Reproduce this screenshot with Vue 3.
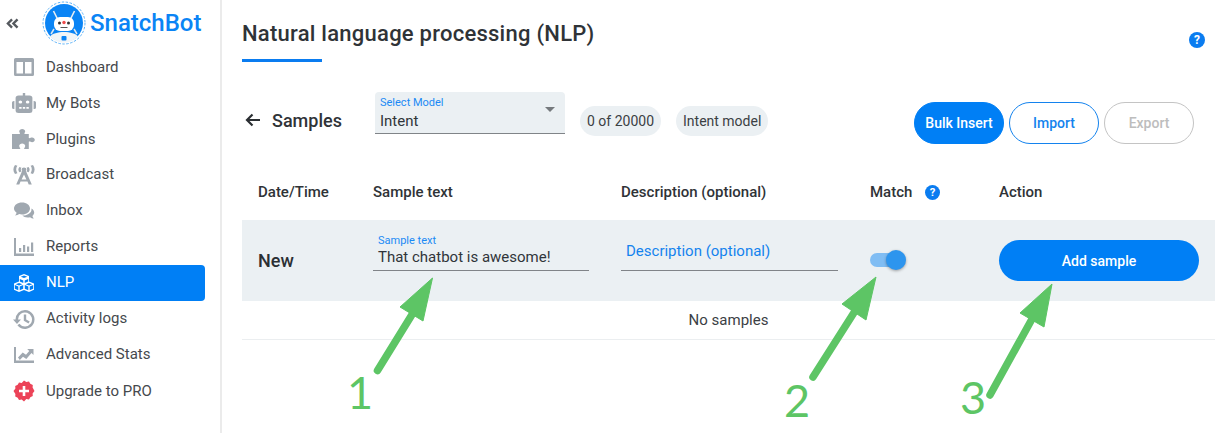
<script setup>
const icons = {
  dash: { vb: '-2 0 24 20', d: 'M0 2.500A1.500 1.500 0 0 1 1.500 1h17A1.500 1.500 0 0 1 20 2.500v15a1.500 1.500 0 0 1-1.500 1.500h-17A1.500 1.500 0 0 1 0 17.500zM2.500 5v11.500H9V5zM11 5v11.500h6.500V5z' },
  bot: { vb: '0 0 20 20', d: 'M9 0h2v2.500h3.500A2.500 2.500 0 0 1 17 5v12.500a2.500 2.500 0 0 1-2.500 2.500h-9A2.500 2.500 0 0 1 3 17.500V5a2.500 2.500 0 0 1 2.500-2.500H9zM7 7.500a1.500 1.500 0 1 0 0 3 1.500 1.500 0 0 0 0-3zm6 0a1.500 1.500 0 1 0 0 3 1.500 1.500 0 0 0 0-3zM6 14v1.800h2V14zm3 0v1.800h2V14zm3 0v1.800h2V14zM1.500 8H2v8h-.5A1.500 1.500 0 0 1 0 14.500v-5A1.500 1.500 0 0 1 1.500 8zM18 8h.5A1.500 1.500 0 0 1 20 9.500v5a1.500 1.500 0 0 1-1.500 1.500H18z' },
  plug: { vb: '0 0 20 20', d: 'M0 5h6.500C7 4 6 3.500 6 2.300 6 1 7.200 0 8.500 0S11 1 11 2.300C11 3.500 10 4 10.500 5H14v4c1 .5 1.500-.5 2.700-.5 1.300 0 2.300 1 2.300 2.300s-1 2.400-2.300 2.400c-1.200 0-1.700-1-2.700-.5V20H10c.5-1.200 1-2 1-3.200 0-1.300-1.200-2.300-2.500-2.300S6 15.500 6 16.800c0 1.200.6 2 1 3.200H0z' },
  cast: { vb: '0 0 20 20', d: 'M2.500 0l2 .8C3.300 2.700 3 5.500 4.500 8.200l-2 .8C.7 6 .7 2.800 2.500 0zM17.500 0c1.800 2.800 1.800 6 0 9l-2-.8c1.500-2.700 1.200-5.500 0-7.400zM6.200 2l1.700.8c-.7 1.100-.7 2.500 0 3.600L6.200 7.200C5 5.500 5 3.700 6.200 2zM13.800 2c1.200 1.700 1.200 3.500 0 5.200l-1.700-.8c.7-1.100.7-2.500 0-3.600zM10 2.500a2 2 0 0 1 2 2c0 .5-.2 1-.5 1.300L16.500 19.500h-2.600l-1-3H7.100l-1 3H3.500L8.500 5.800C8.200 5.500 8 5 8 4.500a2 2 0 0 1 2-2zM10 9.500L8 14.400h4z' },
  inbox: { vb: '-2 -0.500 24 20', d: 'M8 1c4.500 0 8 2.600 8 6s-3.500 6-8 6c-1 0-2-.1-2.800-.4C4.200 13.400 2.700 14 1 14c.8-.8 1.400-1.800 1.600-2.800C1 10.100 0 8.700 0 7c0-3.400 3.500-6 8-6zM17.500 7c1.600 1 2.700 2.500 2.700 4.100 0 1.300-.7 2.500-1.800 3.400.2.900.7 1.700 1.400 2.500-1.500 0-2.800-.6-3.700-1.300-.8.300-1.700.4-2.600.4-2.100 0-4-.7-5.200-2 4.500.1 9.800-2.200 9.200-7.100z' },
  rep: { vb: '-2 -1 24 20', d: 'M0 0h2v15.500h18V18H0zM5 10h2.200v4H5zM9 7h2.200v7H9zM13 8.500h2.200V14H13zM17 4.500h2.200V14H17z' },
  cube: { vb: '-2 -1 24 20', d: 'M10 0l5 2v5.500l5 2v6.300L15 18l-5-2-5 2-5-2.200V9.500l5-2V2zM6.700 2.700L10 4l3.300-1.300L10 1.400zM5.800 5v2.500l3.500 1.400V6.400zM10.700 6.400v2.500l3.500-1.400V5zM1.700 10.200L5 11.500l3.300-1.300L5 8.900zM11.700 10.200L15 11.500l3.300-1.300L15 8.900zM.8 11v3.800l3.500 1.500v-3.900zM5.700 12.400v3.900l3.500-1.500V11zM10.800 11v3.800l3.500 1.500v-3.900zM15.700 12.400v3.900l3.500-1.500V11z' },
  hist: { vb: '-2 -0.500 24 20', d: 'M11 .5a9.500 9.500 0 1 1-7.600 15.200l2-1.500A7 7 0 1 0 4 10h3l-4 4.500L-1 10h2.500A9.500 9.500 0 0 1 11 .5zM9.800 5h2.400v5l3.500 2-1.200 2-4.700-2.800z' },
  adv: { vb: '-2 1 24 20', d: 'M0 3h2v13.500h18V19H0zM4 13.500l4.700-5 3.300 2.200 3.200-3.600-2-2h6.300v6l-2-2-5.200 5.800-3.300-2.200-3.200 3.400z' }
}
const menu = [
  { label: 'Dashboard', icon: 'dash' },
  { label: 'My Bots', icon: 'bot' },
  { label: 'Plugins', icon: 'plug' },
  { label: 'Broadcast', icon: 'cast' },
  { label: 'Inbox', icon: 'inbox' },
  { label: 'Reports', icon: 'rep' },
  { label: 'NLP', icon: 'cube', active: true },
  { label: 'Activity logs', icon: 'hist' },
  { label: 'Advanced Stats', icon: 'adv' }
]
</script>

<template>
  <div class="page">
    <aside class="side">
      <div class="brand">
        <svg class="collapse" width="13" height="11" viewBox="0 0 14 12" fill="none" stroke="#55595e" stroke-width="2.600">
          <path d="M6.500 1.500L2 6l4.500 4.500M12.500 1.500L8 6l4.500 4.500" />
        </svg>
        <svg class="logo" width="44" height="44" viewBox="0 0 44 44">
          <circle cx="22" cy="22" r="21" fill="#fff" stroke="#5cb2f8" stroke-width="1" stroke-dasharray="2.500 1.500" />
          <circle cx="22" cy="22" r="19" fill="#0a84f5" />
          <path d="M8 35.500c2-3 8-4.500 14-4.500s12 1.500 14 4.500a19 19 0 0 1-28 0z" fill="#f2f5f7" />
          <path d="M11.500 10l4 8M32.500 10l-4 8" stroke="#e9eef2" stroke-width="1.600" />
          <path d="M12 28l-3 5M32 28l3 5" stroke="#dfe7ee" stroke-width="1.500" />
          <rect x="12" y="16" width="20" height="14" rx="6" fill="#fff" />
          <circle cx="17.500" cy="22" r="1.500" fill="#333" />
          <circle cx="26.500" cy="22" r="1.500" fill="#333" />
          <circle cx="22" cy="21.500" r="1.700" fill="#ee4b4b" />
          <path d="M18.500 26.500h7" stroke="#555" stroke-width="1" />
          <rect x="19.500" y="35" width="5" height="4.500" rx="1" fill="#0a84f5" />
        </svg>
        <span class="brand-name">SnatchBot</span>
      </div>
      <nav class="nav">
        <a v-for="item in menu" :key="item.label" class="nav-item" :class="{ active: item.active }">
          <svg class="nav-icon" width="24" height="20" :viewBox="icons[item.icon].vb" preserveAspectRatio="none">
            <path :d="icons[item.icon].d" fill-rule="evenodd" />
          </svg>
          <span>{{ item.label }}</span>
        </a>
        <a class="nav-item">
          <svg class="nav-icon" width="24" height="22" viewBox="-1 0 24 22">
            <path d="M11 .5l2.300 1.400 2.700-.4 1.300 2.300 2.500 1.100-.2 2.700L21.500 11l-1.900 2.400.2 2.700-2.500 1.100-1.300 2.300-2.700-.4L11 21.500l-2.300-1.900-2.700.4-1.300-2.300-2.500-1.100.2-2.700L.5 11l1.900-2.400-.2-2.700 2.500-1.100L6 2.500l2.700.4z" fill="#ec4358" />
            <path d="M9.700 6h2.600v3.700H16v2.600h-3.700V16H9.700v-3.700H6V9.700h3.700z" fill="#fff" />
          </svg>
          <span>Upgrade to PRO</span>
        </a>
      </nav>
    </aside>

    <main class="main">
      <header class="head">
        <h1>Natural language processing (NLP)</h1>
        <svg class="help-top" width="16" height="16" viewBox="0 0 16 16">
          <circle cx="8" cy="8" r="8" fill="#0a7cf0" />
          <text x="8" y="12.200" text-anchor="middle" class="q">?</text>
        </svg>
      </header>
      <div class="title-bar"></div>

      <section class="toolbar">
        <svg class="back" width="16" height="14" viewBox="0 0 16 14" fill="none" stroke="#2b2f33" stroke-width="2.200">
          <path d="M15 7H2M7.500 1.500L2 7l5.500 5.500" />
        </svg>
        <h2>Samples</h2>
        <div class="select">
          <label>Select Model</label>
          <div class="value">Intent</div>
          <i class="caret"></i>
        </div>
        <span class="chip first">0 of 20000</span>
        <span class="chip">Intent model</span>
        <div class="actions">
          <button class="btn solid">Bulk Insert</button>
          <button class="btn outline">Import</button>
          <button class="btn off">Export</button>
        </div>
      </section>

      <section class="table">
        <div class="grid thead">
          <div>Date/Time</div>
          <div>Sample text</div>
          <div>Description (optional)</div>
          <div class="match">Match
            <svg width="15" height="15" viewBox="0 0 16 16">
              <circle cx="8" cy="8" r="8" fill="#0a7cf0" />
              <text x="8" y="12.200" text-anchor="middle" class="q">?</text>
            </svg>
          </div>
          <div>Action</div>
        </div>
        <div class="grid trow">
          <div class="new">New</div>
          <div class="field">
            <label>Sample text</label>
            <div class="field-value">That chatbot is awesome!</div>
          </div>
          <div class="field desc">
            <div class="placeholder">Description (optional)</div>
          </div>
          <div><div class="switch"><i></i></div></div>
          <div><button class="add">Add sample</button></div>
        </div>
        <div class="empty">No samples</div>
      </section>
    </main>

    <svg class="arrows" width="1221" height="433" viewBox="0 0 1221 433">
      <g fill="#5dc565" stroke="#5dc565">
        <path d="M377.500 370.500L413 313" stroke-width="7.500" stroke-linecap="round" fill="none" />
        <path d="M432.500 278L400 307 423 321z" stroke-width="1" />
        <path d="M813 377L855 311" stroke-width="7.500" stroke-linecap="round" fill="none" />
        <path d="M876 277L842 304 866 320z" stroke-width="1" />
        <path d="M990 395L1032 319" stroke-width="7.500" stroke-linecap="round" fill="none" />
        <path d="M1052 284L1020 313 1044 327z" stroke-width="1" />
      </g>
    </svg>
    <span class="num n1">1</span>
    <span class="num n2">2</span>
    <span class="num n3">3</span>
  </div>
</template>

<style>
html, body { margin: 0; background: #fff; }
</style>

<style scoped>
.page {
  position: relative;
  display: flex;
  width: 1221px;
  height: 433px;
  overflow: hidden;
  font-family: Roboto, "Liberation Sans", sans-serif;
  color: #2f3337;
}
.side {
  flex: 0 0 220px;
  box-sizing: content-box;
  border-right: 2px solid #ebebeb;
}
.brand {
  display: flex;
  align-items: center;
  height: 49px;
  padding-left: 6px;
}
.collapse { margin-right: 23px; margin-top: -3px; }
.logo { margin-right: 4px; margin-top: -4px; }
.brand-name {
  font-size: 24px;
  font-weight: 500;
  color: #0a84f5;
  margin-top: -4px;
}
.nav { display: flex; flex-direction: column; width: 205px; }
.nav-item {
  display: flex;
  align-items: center;
  height: 36px;
  padding-left: 12px;
  font-size: 15px;
  color: #45494d;
  border-radius: 0 4px 4px 0;
}
.nav-item span { margin-left: 10px; }
.nav-item:nth-child(n+4):nth-child(-n+9) span { margin-top: -2px; }
.nav-icon { fill: #a0a8b0; flex: none; }
.nav-item.active { background: #007ff5; color: #fff; }
.nav-item.active .nav-icon { fill: #fff; }

.main { flex: 1; padding: 0 6px 0 20px; min-width: 0; }
.head {
  display: flex;
  justify-content: space-between;
  height: 59px;
}
h1 {
  margin: 21px 0 0;
  font-size: 22px;
  line-height: 26px;
  font-weight: 500;
  letter-spacing: .25px;
  color: #2f3337;
}
.help-top { margin: 32px 10px 0 0; }
.q { font: 700 12px Roboto, sans-serif; fill: #fff; }
.title-bar { width: 80px; height: 3px; background: #0a7cf0; }

.toolbar {
  display: flex;
  align-items: center;
  height: 56px;
  margin-top: 30px;
}
.back { margin-left: 3px; margin-right: 11px; }
h2 {
  width: 103px;
  margin: 0;
  font-size: 18px;
  font-weight: 500;
  color: #2f3337;
}
.select {
  position: relative;
  align-self: flex-start;
  box-sizing: border-box;
  width: 190px;
  height: 42px;
  padding: 4px 5px 0;
  background: #ebf0f3;
  border-bottom: 1px solid #808488;
  border-radius: 4px 4px 0 0;
}
.select label { display: block; font-size: 11px; line-height: 13px; color: #1b8af5; }
.value { font-size: 15px; line-height: 20px; margin-top: 2px; color: #30353a; }
.caret {
  position: absolute;
  right: 10px;
  top: 15px;
  border: 5px solid transparent;
  border-top-color: #75797d;
  border-bottom-width: 0;
}
.chip {
  display: inline-flex;
  align-items: center;
  height: 30px;
  margin-top: 2px;
  margin-left: 15px;
  padding: 0 7px;
  font-size: 14px;
  color: #3b4044;
  background: #ebf0f3;
  border-radius: 15px;
}
.actions {
  display: flex;
  align-self: flex-start;
  gap: 5px;
  margin-left: auto;
  margin-top: 10px;
  margin-right: 21px;
}
.btn {
  box-sizing: border-box;
  width: 90px;
  height: 42px;
  padding: 0;
  font: 500 14px Roboto, sans-serif;
  border-radius: 21px;
  border: 1px solid;
  background: #fff;
}
.solid { background: #007ff5; border-color: #007ff5; color: #fff; }
.outline { border-color: #1483ee; color: #1483ee; }
.off { border-color: #c4c4c4; color: #bdbdbd; }

.grid {
  display: grid;
  grid-template-columns: 115px 248px 249px 129px 1fr;
  padding-left: 16px;
}
.table { margin-top: 22px; }
.thead {
  box-sizing: border-box;
  align-items: center;
  height: 50px;
  padding-bottom: 6px;
  font-size: 15px;
  font-weight: 500;
  color: #2f3337;
}
.match { display: flex; align-items: center; gap: 13px; }
.trow { align-items: center; height: 81px; background: #ebf0f3; }
.new { font-size: 18px; font-weight: 500; color: #2b2f33; }
.field {
  align-self: start;
  box-sizing: border-box;
  height: 39px;
  width: 216px;
  margin-top: 12px;
  padding: 3px 5px 0;
  border-bottom: 1px solid #808488;
}
.field label { display: block; font-size: 11px; line-height: 12px; color: #1b8af5; }
.field-value { font-size: 15px; line-height: 20px; color: #30353a; }
.desc { width: 217px; padding-top: 9px; }
.placeholder { font-size: 15px; line-height: 20px; color: #1483ee; }
.switch {
  position: relative;
  width: 34px;
  height: 14px;
  background: #80bdf3;
  border-radius: 7px;
  margin-top: -1px;
}
.switch i {
  position: absolute;
  right: -2px;
  top: -3px;
  width: 20px;
  height: 20px;
  border-radius: 50%;
  background: #2d95ee;
  box-shadow: 0 1px 3px rgba(0, 0, 0, .35);
}
.add {
  display: block;
  width: 200px;
  height: 41px;
  padding: 0;
  font: 500 14px Roboto, sans-serif;
  color: #fff;
  background: #007ff5;
  border: 0;
  border-radius: 21px;
}
.empty {
  height: 38px;
  line-height: 38px;
  text-align: center;
  font-size: 15px;
  color: #3b4044;
  border-bottom: 1px solid #ebeef0;
}

.arrows { position: absolute; left: 0; top: 0; pointer-events: none; }
.num {
  position: absolute;
  font: 400 45px/1 Lato, sans-serif;
  color: #5dc565;
}
.n1 { left: 347px; top: 370px; }
.n2 { left: 784px; top: 378px; }
.n3 { left: 960px; top: 375px; }
</style>
